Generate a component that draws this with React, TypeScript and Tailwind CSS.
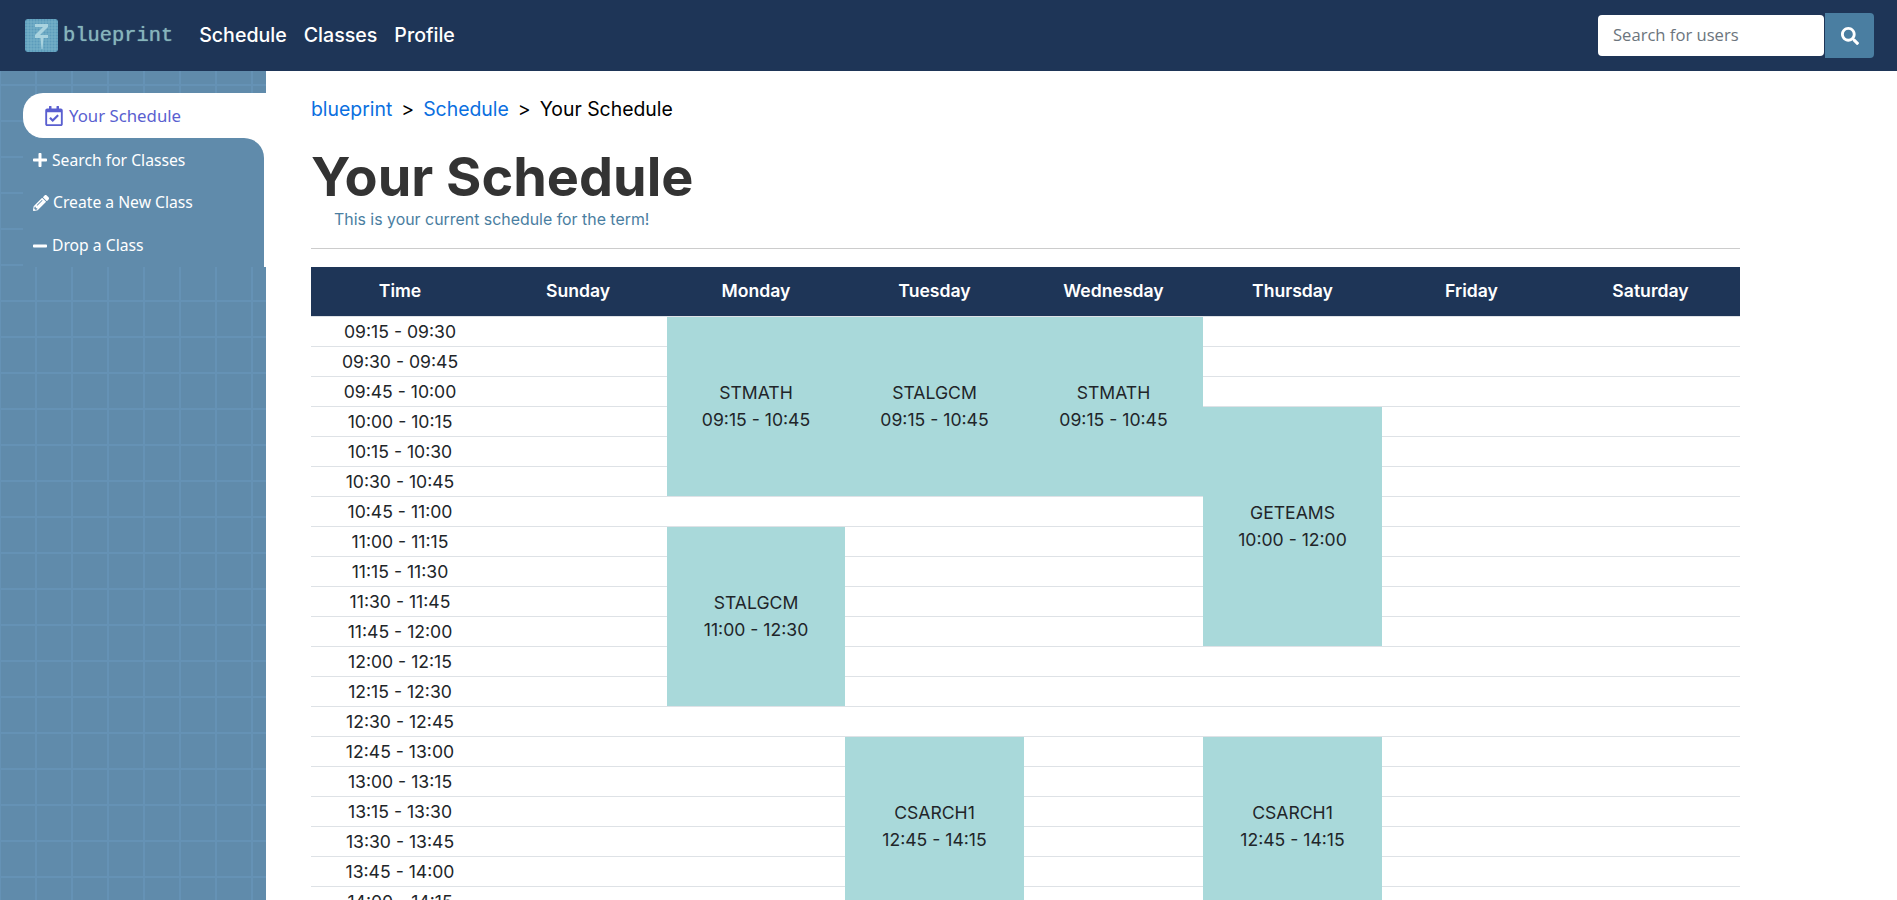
import { FaMinus, FaPencilAlt, FaPlus, FaRegCalendarCheck, FaSearch } from 'react-icons/fa';

const days = ['Time', 'Sunday', 'Monday', 'Tuesday', 'Wednesday', 'Thursday', 'Friday', 'Saturday'];

// slot index -> day column -> class block
const blocks: Record<number, Record<number, { code: string; time: string; span: number }>> = {
  0: {
    2: { code: 'STMATH', time: '09:15 - 10:45', span: 6 },
    3: { code: 'STALGCM', time: '09:15 - 10:45', span: 6 },
    4: { code: 'STMATH', time: '09:15 - 10:45', span: 6 },
  },
  3: { 5: { code: 'GETEAMS', time: '10:00 - 12:00', span: 8 } },
  7: { 2: { code: 'STALGCM', time: '11:00 - 12:30', span: 6 } },
  14: {
    3: { code: 'CSARCH1', time: '12:45 - 14:15', span: 6 },
    5: { code: 'CSARCH1', time: '12:45 - 14:15', span: 6 },
  },
};

function fmt(mins: number) {
  const h = Math.floor(mins / 60);
  const m = mins % 60;
  return `${String(h).padStart(2, '0')}:${String(m).padStart(2, '0')}`;
}

const slots = Array.from({ length: 24 }, (_, i) => {
  const start = 9 * 60 + 15 + i * 15;
  return `${fmt(start)} - ${fmt(start + 15)}`;
});

function isCovered(slot: number, col: number) {
  for (const key of Object.keys(blocks)) {
    const start = Number(key);
    const block = blocks[start][col];
    if (block && slot > start && slot < start + block.span) return true;
  }
  return false;
}

function Logo() {
  return (
    <div className="flex items-center gap-[5px]">
      <svg width="33" height="33" viewBox="0 0 33 33" className="block">
        <rect width="33" height="33" rx="3" fill="#5b9bbb" />
        {[3, 6, 9, 12, 15, 18, 21, 24, 27, 30].map((p) => (
          <g key={p} stroke="#83b9cf" strokeWidth="0.7">
            <line x1={p} y1="0" x2={p} y2="33" />
            <line x1="0" y1={p} x2="33" y2={p} />
          </g>
        ))}
        <path d="M10 5h13v3L15 16h8v3H10v-3l8-8h-8z" fill="#a9d3df" />
        <path d="M15.5 19h3l-1 11h-1z" fill="#a9d3df" />
      </svg>
      <span className="mt-[2px] font-['Liberation_Mono',monospace] text-[20.4px] leading-none text-[#86b5bb] [text-shadow:0_0_1px_#7fb0b8]">blueprint</span>
    </div>
  );
}

export default function App() {
  return (
    <div className="flex h-screen flex-col overflow-hidden bg-white font-['Inter',sans-serif]">
      {/* Navbar */}
      <nav className="flex h-[71px] shrink-0 items-center justify-between bg-[#1e3557] pl-[25px] pr-[23px]">
        <div className="flex items-center">
          <Logo />
          <div className="ml-[26px] flex gap-[17px] text-[19.6px] font-medium text-white">
            <a>Schedule</a>
            <a>Classes</a>
            <a>Profile</a>
          </div>
        </div>
        <div className="flex items-center">
          <div className="flex h-[41px] w-[226px] items-center rounded-[4px] bg-white pl-[15px] font-['Open_Sans',sans-serif] text-[16.6px] text-[#6c757d]">
            Search for users
          </div>
          <button className="ml-[1px] flex h-[45px] w-[49px] items-center justify-center rounded-r-[4px] bg-[#4a7ea1] text-white">
            <FaSearch className="h-[18px] w-[18px]" />
          </button>
        </div>
      </nav>

      <div className="flex min-h-0 flex-1">
        {/* Sidebar */}
        <aside className="w-[266px] shrink-0 bg-[#608bab] bg-[linear-gradient(to_right,#6592b5_2px,transparent_2px),linear-gradient(to_bottom,#6592b5_2px,transparent_2px)] bg-[size:36px_36px] bg-[position:35px_13px] pt-[22px]">
          <div className="ml-[23px] flex h-[45px] items-center rounded-l-[20px] bg-white pl-[22px] font-['Noto_Sans',sans-serif] text-[16.8px] text-[#5a5fd0]">
            <FaRegCalendarCheck className="mr-[6px] h-[20px] w-[18px]" />
            Your Schedule
          </div>
          <div className="ml-[23px] h-[129px] bg-white pr-[2px]">
            <div className="flex h-full flex-col rounded-tr-[20px] bg-[#608bab] pl-[10px] pt-[1px] font-['Noto_Sans',sans-serif] text-[15.7px] text-white">
              <a className="flex h-[43px] items-center gap-[5px]"><FaPlus className="h-[16px] w-[14px]" />Search for Classes</a>
              <a className="flex h-[43px] items-center gap-[4px]"><FaPencilAlt className="h-[16px] w-[16px]" />Create a New Class</a>
              <a className="flex h-[43px] items-center gap-[5px]"><FaMinus className="h-[16px] w-[14px]" />Drop a Class</a>
            </div>
          </div>
        </aside>

        {/* Main */}
        <main className="min-w-0 flex-1 pl-[45px]">
          <div className="w-[1429px]">
            <div className="pt-[26px] text-[19.4px] leading-[24px] text-black">
              <a className="text-[#0b6fe0]">blueprint</a>
              <span className="mx-[9px]">&gt;</span>
              <a className="text-[#0b6fe0]">Schedule</a>
              <span className="mx-[9px]">&gt;</span>
              <span>Your Schedule</span>
            </div>
            <h1 className="mt-[23px] text-[54px] font-bold leading-[66px] text-[#333333]">Your Schedule</h1>
            <p className="ml-[23px] text-[15.9px] leading-[20px] text-[#4a7ea1]">This is your current schedule for the term!</p>
            <hr className="mt-[18px] border-t border-[#cccccc]" />
            <table className="mt-[18px] w-full table-fixed border-collapse text-center">
              <colgroup>
                <col className="w-[178px]" />
                <col className="w-[178px]" />
                <col className="w-[178px]" />
                <col className="w-[179px]" />
                <col className="w-[179px]" />
                <col className="w-[179px]" />
                <col />
                <col />
              </colgroup>
              <thead>
                <tr className="h-[49px] bg-[#1e3557] text-[17.6px] text-white">
                  {days.map((d) => (
                    <th key={d} className="font-semibold">{d}</th>
                  ))}
                </tr>
              </thead>
              <tbody>
                {slots.map((slot, i) => (
                  <tr key={slot} className="h-[30px] text-[17.6px] text-[#212529]">
                    <td className="border-t border-[#dee2e6] p-0 leading-[29px]">{slot}</td>
                    {[1, 2, 3, 4, 5, 6, 7].map((col) => {
                      if (isCovered(i, col)) return null;
                      const block = blocks[i]?.[col];
                      if (block) {
                        return (
                          <td key={col} rowSpan={block.span} className="border-t border-[#dee2e6] bg-[#a9d9da] p-0 leading-[27px]">
                            <div>{block.code}</div>
                            <div>{block.time}</div>
                          </td>
                        );
                      }
                      return <td key={col} className="border-t border-[#dee2e6] p-0" />;
                    })}
                  </tr>
                ))}
              </tbody>
            </table>
          </div>
        </main>
      </div>
    </div>
  );
}
